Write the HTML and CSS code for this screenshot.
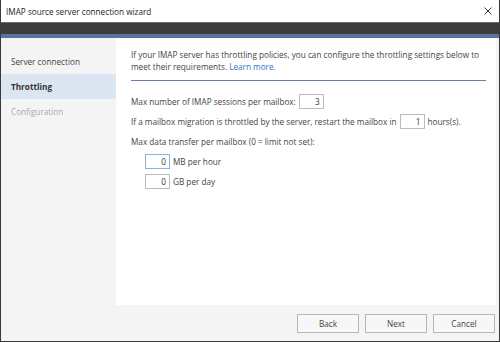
FILE: index.html
```html
<!DOCTYPE html>
<html lang="en">

<head>
    <meta charset="UTF-8">
    <meta name="viewport" content="width=device-width, initial-scale=1.0">
    <title>IMAP source server connection wizard</title>

    <link rel="stylesheet" href="styles.css">
</head>

<body>
    <div class="window">
        <div class="titlebar">
            <span class="title">IMAP source server connection wizard</span>
            <span class="close">
                <svg width="8" height="8" viewBox="0 0 8 8">
                    <path d="M0.5 0.5 L7.5 7.5 M7.5 0.5 L0.5 7.5" stroke="#333" stroke-width="1" fill="none" />
                </svg>
            </span>
        </div>
        <div class="band"></div>

        <div class="main">
            <div class="steps">
                <div class="step">Server connection</div>
                <div class="step current">Throttling</div>
                <div class="step off">Configuration</div>
            </div>

            <div class="content">
                <div class="intro">
                    <div>If your IMAP server has throttling policies, you can configure the throttling settings below to</div>
                    <div>meet their requirements. <a href="#">Learn more.</a></div>
                </div>

                <div class="row first">
                    <span>Max number of IMAP sessions per mailbox:</span>
                    <div class="num">3</div>
                </div>
                <div class="row">
                    <span>If a mailbox migration is throttled by the server, restart the mailbox in</span>
                    <div class="num">1</div>
                    <span>hours(s).</span>
                </div>
                <div class="row">
                    <span>Max data transfer per mailbox (0 = limit not set):</span>
                </div>
                <div class="row sub">
                    <div class="num focus">0</div>
                    <span>MB per hour</span>
                </div>
                <div class="row sub">
                    <div class="num">0</div>
                    <span>GB per day</span>
                </div>
            </div>
            <div class="gutter"></div>
        </div>

        <div class="footer">
            <button>Back</button>
            <button>Next</button>
            <button>Cancel</button>
        </div>
    </div>
</body>

</html>
```

FILE: styles.css
```css
:root {
    --nav-width: 115px;
    --text: #444;
    --panel: #f4f4f4;
}

html,
body {
    margin: 0;
    height: 100%;
}

body {
    font-family: "Open Sans", "Liberation Sans", sans-serif;
    font-size: 8.2px;
    color: var(--text);
    background-color: #fff;
}

.window {
    box-sizing: border-box;
    width: 500px;
    height: 342px;
    border: 1px solid #3a3a3a;
    border-top: none;
    display: flex;
    flex-direction: column;
    background-color: var(--panel);
}

.titlebar {
    height: 22px;
    background-color: #fff;
    display: flex;
    align-items: center;
    justify-content: space-between;
    padding: 0 6px 0 5px;
}

.titlebar .title {
    color: #222;
}

.titlebar .close {
    display: flex;
    margin-right: 1px;
}

.band {
    height: 11px;
    background-color: #3c3c3c;
    border-top: 1px solid #6e6e6e;
    border-bottom: 4px solid #5a72a0;
}

.main {
    height: 267px;
    display: flex;
}

.steps {
    width: var(--nav-width);
    padding-top: 11px;
}

.step {
    height: 25px;
    line-height: 25px;
    padding-left: 10px;
    color: #444;
}

.step.current {
    background-color: #dce5f2;
    font-weight: bold;
    color: #333;
}

.step.off {
    color: #aaa;
}

.content {
    flex: 1;
    background-color: #fff;
    padding: 11px 10px 0 15px;
}

.gutter {
    width: 3px;
}

.intro {
    line-height: 12px;
    padding-bottom: 7px;
    border-bottom: 1px solid #6d80a6;
    white-space: nowrap;
}

.intro a {
    color: #2e72c4;
    text-decoration: none;
}

.row {
    display: flex;
    align-items: center;
    gap: 3px;
    height: 16px;
    margin-bottom: 4px;
}

.row.first {
    margin-top: 12px;
}

.row.sub {
    padding-left: 14px;
}

.row.sub:nth-child(5) {
    margin-top: 4px;
}

.num {
    box-sizing: border-box;
    width: 25px;
    height: 15px;
    border: 1px solid #bcbcbc;
    text-align: right;
    padding-right: 3px;
    line-height: 13px;
    color: #333;
}

.num.focus {
    border-color: #8fb2dc;
}

.footer {
    flex: 1;
    display: flex;
    justify-content: flex-end;
    align-items: flex-start;
    gap: 6px;
    padding: 9px 4px 0 0;
}

.footer button {
    width: 62px;
    height: 19px;
    font-family: inherit;
    font-size: 8.2px;
    color: #444;
    background-color: #f7f7f7;
    border: 1px solid #b7b7b7;
    padding: 0;
}
```
